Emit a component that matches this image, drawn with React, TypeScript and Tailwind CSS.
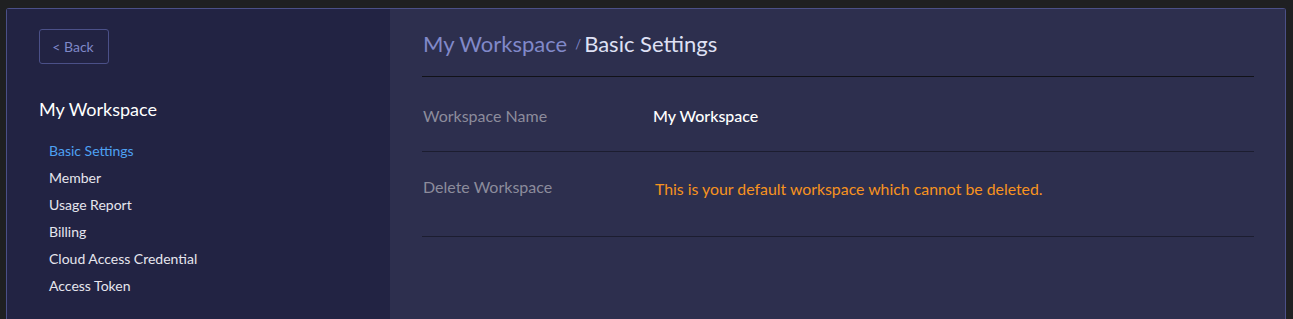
const navItems = [
  "Basic Settings",
  "Member",
  "Usage Report",
  "Billing",
  "Cloud Access Credential",
  "Access Token",
];

export default function App() {
  return (
    <div
      className="h-[319px] overflow-hidden bg-[#1f2022] pt-2 pl-[6px] pr-[7px]"
      style={{ fontFamily: "Lato, 'Open Sans', sans-serif" }}
    >
      <div className="flex h-[330px] rounded-t-[3px] border border-b-0 border-[#4b5088]">
        {/* Sidebar */}
        <aside className="w-[383px] shrink-0 bg-[#222343] pl-8 pt-5">
          <button className="h-[35px] w-[70px] rounded-[3px] border border-[#4b5088] pr-[2px] text-[14px] text-[#7f88c8]">
            &lt; Back
          </button>
          <h2 className="mt-[34px] text-[18px] leading-[22px] text-white">My Workspace</h2>
          <ul className="mt-[17px] pl-[10px]">
            {navItems.map((item, i) => (
              <li
                key={item}
                className={
                  i === 0
                    ? "text-[14px] leading-[27px] text-[#4ea1f3]"
                    : "text-[14px] leading-[27px] text-[#e6e6ee]"
                }
              >
                {item}
              </li>
            ))}
          </ul>
        </aside>

        {/* Main */}
        <main className="flex-1 bg-[#2d2f4e] pl-8 pr-[31px]">
          <div className="flex h-[68px] items-center border-b border-[#111218] pt-[1px] pl-[1px]">
            <span className="text-[22px] text-[#8189c9]">My Workspace</span>
            <span className="ml-2 mr-[3px] mt-[3px] text-[13px] text-[#8189c9]">/</span>
            <span className="text-[22px] text-[#dfe1f5]">Basic Settings</span>
          </div>
          <div className="flex h-[75px] items-center border-b border-[#1c1d30] pt-[4px] pl-[1px]">
            <span className="w-[230px] text-[16px] text-[#8c8c9c]">Workspace Name</span>
            <span className="text-[16px] font-medium text-white">My Workspace</span>
          </div>
          <div className="flex h-[85px] items-center border-b border-[#1c1d30] pl-[1px] pb-[14px]">
            <span className="w-[232px] text-[16px] text-[#8c8c9c]">Delete Workspace</span>
            <span className="mt-[4px] text-[15.85px] text-[#f7931e]">
              This is your default workspace which cannot be deleted.
            </span>
          </div>
        </main>
      </div>
    </div>
  );
}
